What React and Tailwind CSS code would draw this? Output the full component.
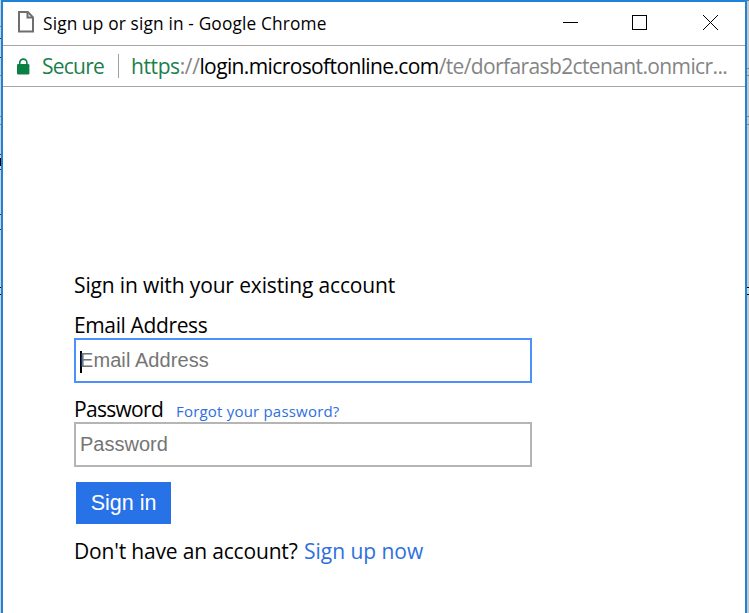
import React from "react";

const ui = "font-['Open_Sans','Noto_Sans',sans-serif]";
const arial = "font-['Liberation_Sans',Arial,sans-serif]";

function TitleBar() {
  return (
    <header className="flex h-11 shrink-0 border-b border-[#a6a6a6] pl-[15px]">
      <svg className="mt-[9px] shrink-0" width="16" height="22" viewBox="0 0 16 22" fill="none" stroke="#6e6e6e" strokeWidth="2">
        <path d="M1 1H9.8L15 6.3V20.5H1Z" fill="#fff" />
        <path d="M9.5 1V6.6H15" />
      </svg>
      <h1 className="ml-[9px] mt-2 w-[284px] whitespace-nowrap text-[17.3px] leading-7 tracking-[0.15px] text-black">
        Sign up or sign in - Google Chrome
      </h1>
      <div className="ml-auto mr-[27px] mt-[13px] flex">
        <svg width="155" height="15" viewBox="0 0 155 15" fill="none" stroke="#000" shapeRendering="crispEdges">
          <path d="M0 7.5H15" />
          <rect x="69.5" y="0.5" width="14" height="14" />
          <path d="M140 0L155 15M155 0L140 15" shapeRendering="auto" />
        </svg>
      </div>
    </header>
  );
}

function AddressBar() {
  return (
    <div className="flex h-[41px] shrink-0 items-center whitespace-nowrap border-b border-[#a6a6a6] pl-[14px] text-[21px] text-[#858585]">
      <svg width="13" height="17" viewBox="0 0 13 17" className="shrink-0">
        <path d="M2.7 7V4.7a3.6 3.6 0 0 1 7.2 0V7" fill="none" stroke="#0b8043" strokeWidth="1.6" />
        <rect x="0" y="6" width="12.4" height="10.5" rx="1.3" fill="#0b8043" />
      </svg>
      <span className="ml-3 mt-[2px] w-[63px] tracking-[-0.75px] text-[#1b7f4c]">Secure</span>
      <span className="ml-[13px] h-6 w-px bg-[#a0a0a0]" />
      <span className="ml-3 mt-[2px] flex">
        <span className="tracking-[-0.4px]"><span className="text-[#1b7f4c]">https</span>://</span>
        <span className="tracking-[-0.62px] text-black">login.microsoftonline.com</span>
        <span className="tracking-[-0.62px]">/te/dorfarasb2ctenant.onmicr...</span>
      </span>
    </div>
  );
}

export default function App() {
  return (
    <div className={`flex h-[613px] w-[749px] overflow-hidden bg-white ${ui}`}>
      <div className="w-px shrink-0 bg-[#d2d2d2]">
        <div className="mt-[26px] h-px bg-[#888]" />
        <div className="mt-[11px] h-px bg-[#333]" />
        <div className="mt-[18px] h-px bg-[#333]" />
        <div className="mt-[17px] h-px bg-[#888]" />
        <div className="mt-10 h-px bg-[#888]" />
        <div className="mt-[7px] h-px bg-[#888]" />
        <div className="mt-[29px] h-px bg-[#7b1c20]" />
        <div className="mt-[3px] h-2 bg-black" />
        <div className="mt-[3px] h-px bg-[#7b1c20]" />
        <div className="mt-11 h-px bg-[#333]" />
        <div className="mt-[14px] h-px bg-[#333]" />
        <div className="mt-[57px] h-px bg-black" />
        <div className="mt-[6px] h-px bg-black" />
      </div>
      <div className="flex w-[746px] shrink-0 flex-col border-x-2 border-t-2 border-[#1c83d9]">
        <TitleBar />
        <AddressBar />
        <main className="flex flex-col pl-[71px] pt-[183px] text-[21px] leading-[30px] text-black">
          <p className="w-fit whitespace-nowrap tracking-[-0.14px]">Sign in with your existing account</p>
          <label className="mt-[10px] h-[28px] w-fit whitespace-nowrap tracking-[-0.37px]">Email Address</label>
          <div className={`flex h-[45px] w-[458px] items-center border-2 border-[#4b90fb] pl-1 text-[20px] text-[#757575] ${arial}`}>
            <span className="mt-[3px] h-[22px] w-[2px] bg-black" />
            <span className="-ml-[2px] -mt-px tracking-[0.08px]">Email Address</span>
          </div>
          <div className="mt-[11px] flex h-[28px] items-baseline whitespace-nowrap">
            <label className="w-[102px] tracking-[-0.7px]">Password</label>
            <a className="text-[15px] tracking-[0.2px] text-[#2d6fe0]">Forgot your password?</a>
          </div>
          <div className={`flex h-[45px] w-[458px] items-center border-2 border-[#b5b5b5] pl-1 text-[20px] text-[#757575] ${arial}`}>
            <span className="-mt-px">Password</span>
          </div>
          <button className={`ml-[2px] mt-[15px] h-[42px] w-[95px] bg-[#2872e8] text-[21.5px] leading-[42px] text-white ${arial}`}>Sign in</button>
          <p className="mt-[12px] flex whitespace-nowrap tracking-[-0.17px]">
            <span className="w-[230px]">Don't have an account?</span>
            <a className="tracking-[-0.03px] text-[#2d6fe0]">Sign up now</a>
          </p>
        </main>
      </div>
      <div className="w-[2px] shrink-0 bg-[#c8c8c8]">
        <div className="h-px bg-[#777]" />
        <div className="mt-[67px] h-px bg-[#888]" />
        <div className="mt-[6px] h-px bg-[#888]" />
        <div className="mt-10 h-px bg-[#888]" />
        <div className="mt-[7px] h-px bg-[#888]" />
        <div className="mt-[162px] h-px bg-black" />
        <div className="h-[6px] bg-[#c5d8d5]" />
        <div className="h-px bg-black" />
      </div>
    </div>
  );
}
